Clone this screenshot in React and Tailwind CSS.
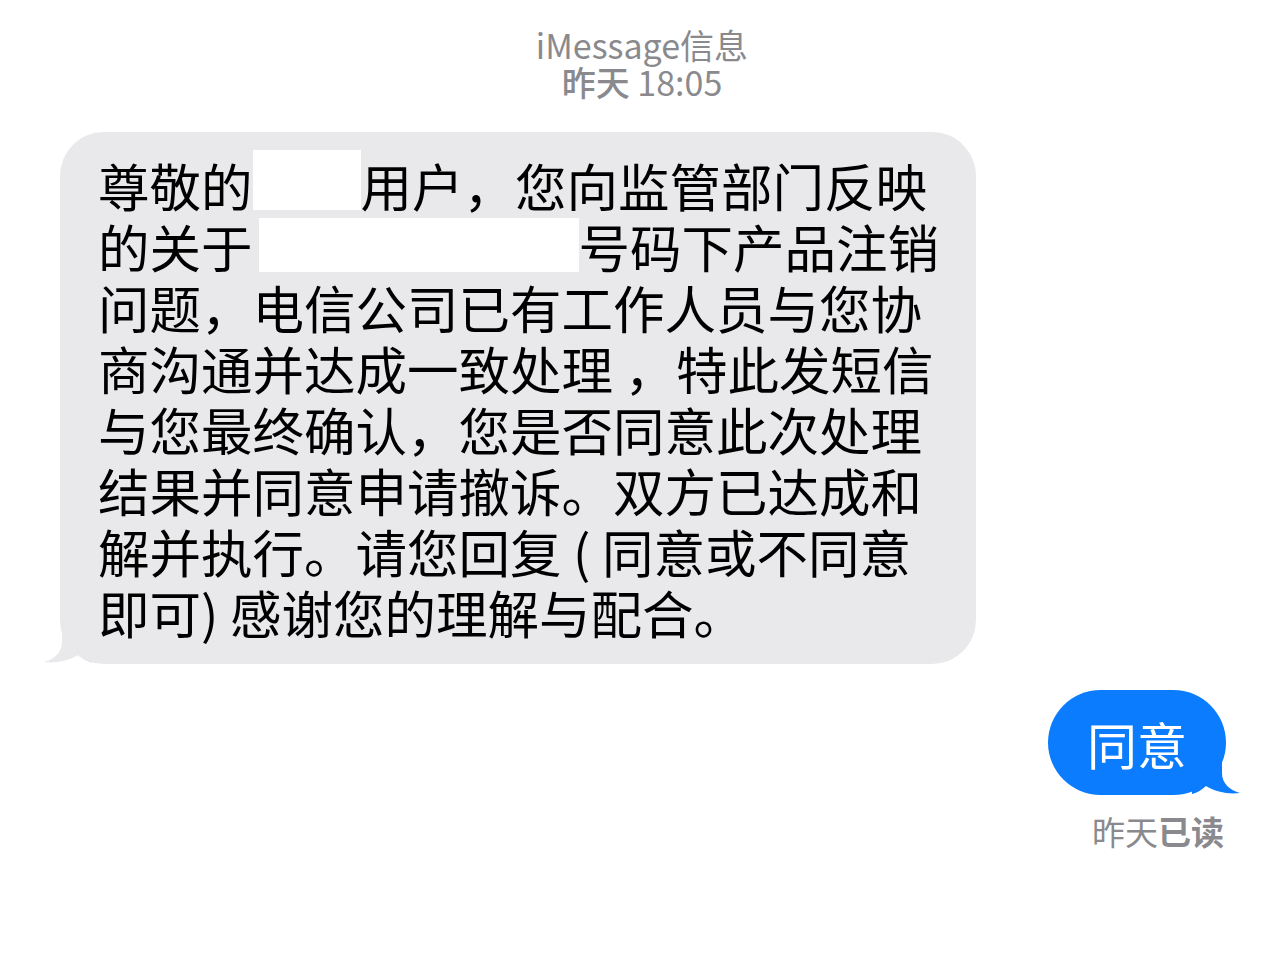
import React from "react";

const FONT = { fontFamily: '"Noto Sans CJK SC", "Noto Sans", sans-serif' };

function Redact({ w, h, t }) {
  return <span className={`relative inline-block bg-white align-top ${w} ${h} ${t}`} />;
}

function TailLeft({ color }) {
  return (
    <svg
      className="absolute bottom-0 left-[-16px]"
      width="48"
      height="36"
      viewBox="0 0 48 36"
    >
      <path
        d="M18 0 V14 C18 25 10 31 0 34 C12 35.5 24 33 34 27 C38 31 44 34 48 35 V0 Z"
        fill={color}
      />
    </svg>
  );
}

function TailRight({ color }) {
  return (
    <svg
      className="absolute bottom-0 right-[-14px]"
      width="48"
      height="36"
      viewBox="0 0 48 36"
    >
      <path
        d="M30 0 V14 C30 25 38 31 48 34 C36 35.5 24 33 14 27 C10 31 4 34 0 35 V0 Z"
        fill={color}
      />
    </svg>
  );
}

export default function App() {
  const lines = [
    <>
      尊敬的<Redact w="w-[108px]" h="h-[60px]" t="top-[-4px]" />用户，您向监管部门反映
    </>,
    <>
      的关于<span className="inline-block w-[6px]" />
      <Redact w="w-[320px]" h="h-[54px]" t="top-[3px]" />号码下产品注销
    </>,
    "问题，电信公司已有工作人员与您协",
    "商沟通并达成一致处理 ，特此发短信",
    "与您最终确认，您是否同意此次处理",
    "结果并同意申请撤诉。双方已达成和",
    "解并执行。请您回复 ( 同意或不同意",
    "即可) 感谢您的理解与配合。",
  ];

  return (
    <div className="min-h-[956px] w-[1284px] bg-white" style={FONT}>
      <div className="flex flex-col items-center pt-[26px] text-[34px] leading-[37px] text-[#8a8a8e]">
        <div>iMessage信息</div>
        <div>
          <span className="font-medium">昨天</span> 18:05
        </div>
      </div>

      <div className="mt-[32px] pl-[60px]">
        <div className="relative inline-block w-[916px] rounded-[44px] bg-[#e9e9eb] pb-[22px] pl-[38px] pt-[22px]">
          <TailLeft color="#e9e9eb" />
          <div className="relative text-[51.5px] leading-[61px] text-black">
            {lines.map((l, i) => (
              <div key={i} className="h-[61px] whitespace-nowrap">
                {l}
              </div>
            ))}
          </div>
        </div>
      </div>

      <div className="mt-[26px] flex flex-col items-end pr-[58px]">
        <div className="relative flex h-[105px] w-[178px] items-center justify-center rounded-full bg-[#0b7cfe]">
          <TailRight color="#0b7cfe" />
          <span className="relative text-[50px] leading-none text-white">同意</span>
        </div>
        <div className="mt-[17px] mr-[2px] text-[33px] leading-[38px] text-[#8a8a8e]">
          昨天<span className="font-semibold">已读</span>
        </div>
      </div>
    </div>
  );
}
